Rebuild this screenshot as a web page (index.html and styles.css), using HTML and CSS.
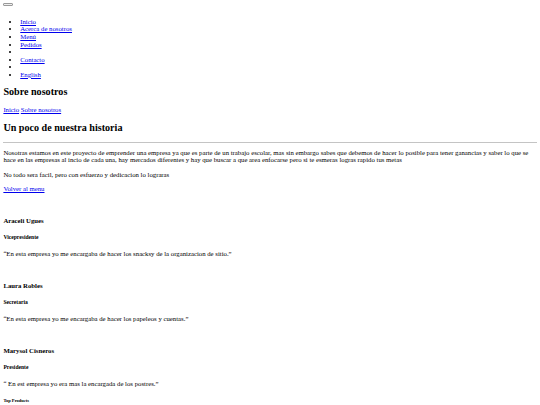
FILE: index.html
```html
<!DOCTYPE html>
<html lang="es">
<head>
<meta charset="utf-8">
<title>Sobre nosotros</title>
<link rel="stylesheet" href="styles.css">
</head>
<body class="page">
<nav class="navbar">
  <button class="toggler" type="button"><span class="toggler-icon"></span></button>
  <ul class="nav-list">
    <li><a class="link" href="#">Inicio</a></li>
    <li><a class="link" href="#">Acerca de nosotros</a></li>
    <li><a class="link" href="#">Menú</a></li>
    <li><a class="link" href="#">Pedidos</a></li>
    <li></li>
    <li><a class="link" href="#">Contacto</a></li>
    <li></li>
    <li><a class="link" href="#">English</a></li>
  </ul>
</nav>
<section class="hero">
  <h2 class="title hero-title">Sobre nosotros</h2>
  <div class="crumbs"><a class="link" href="#">Inicio</a> <a class="link" href="#">Sobre nosotros</a></div>
</section>
<section class="history">
  <h2 class="title">Un poco de nuestra historia</h2>
  <hr class="rule">
  <p class="text first-text">Nosotras estamos en este proyecto de emprender una empresa ya que es parte de un trabajo escolar, mas sin embargo sabes que debemos de hacer lo posible para tener ganancias y saber lo que se hace en las empresas al incio de cada una, hay mercados diferentes y hay que buscar a que area enfocarse pero si te esmeras logras rapido tus metas</p>
  <p class="text">No todo sera facil, pero con esfuerzo y dedicacion lo lograras</p>
  <p class="text"><a class="link" href="#">Volver al menu</a></p>
</section>
<section class="team">
  <div class="member">
    <div class="photo"></div>
    <h4 class="name">Araceli Ugues</h4>
    <h5 class="role">Vicepresidente</h5>
    <p class="text">“En esta empresa yo me encargaba de hacer los snacksy de la organizacion de sitio.”</p>
  </div>
  <div class="member">
    <div class="photo"></div>
    <h4 class="name">Laura Robles</h4>
    <h5 class="role">Secretaria</h5>
    <p class="text">“En esta empresa yo me encargaba de hacer los papeleos y cuentas.”</p>
  </div>
  <div class="member">
    <div class="photo"></div>
    <h4 class="name">Marysol Cisneros</h4>
    <h5 class="role">Presidente</h5>
    <p class="text">“ En est empresa yo era mas la encargada de los postres.”</p>
  </div>
</section>
<footer class="footer">
  <h6 class="footer-title">Top Products</h6>
</footer>
</body>
</html>
```
FILE: styles.css
```css
html {
  background: #fff;
}
.page {
  margin: 3.375px;
  font-family: "Liberation Serif", "Times New Roman", serif;
  font-size: 6.75px;
  line-height: 7.6px;
  color: #000;
}
.link {
  color: #0000ee;
  text-decoration: underline;
}
.navbar {
  font-size: 6.75px;
  line-height: 7.6px;
}
.toggler {
  display: inline-block;
  vertical-align: baseline;
  width: 10px;
  height: 2.6px;
  margin: 0;
  padding: 0;
  border: 0.6px solid #9a9a9a;
  border-radius: 1px;
  background: #efefef;
  font-size: 6.75px;
}
.toggler-icon {
  display: inline-block;
}
.nav-list {
  margin: 5.8px 0 6.75px;
  padding-left: 16.875px;
  list-style: disc;
}
.nav-list li {
  font-size: 6.75px;
  line-height: 7.6px;
}
.title {
  font-size: 10.125px;
  line-height: 11.6px;
  margin: 8.4px 0;
  font-weight: bold;
}
.hero-title {
  margin-top: 7.4px;
}
.crumbs {
  font-size: 6.75px;
  line-height: 7.6px;
}
.rule {
  height: 0;
  margin: 3.375px 0;
  border: 0;
  border-top: 1px solid #c4c4c4;
}
.text {
  font-size: 6.75px;
  line-height: 7.6px;
  margin: 6.75px 0;
}
.first-text {
  margin-top: 5.75px;
}
.photo {
  height: 8.7px;
}
.name {
  font-size: 6.75px;
  line-height: 7.6px;
  margin: 8.98px 0;
  font-weight: bold;
}
.role {
  font-size: 5.6px;
  line-height: 6.75px;
  margin: 9.35px 0;
  font-weight: bold;
}
.footer-title {
  font-size: 4.52px;
  line-height: 5.06px;
  margin: 10.2px 0;
  font-weight: bold;
}
```
